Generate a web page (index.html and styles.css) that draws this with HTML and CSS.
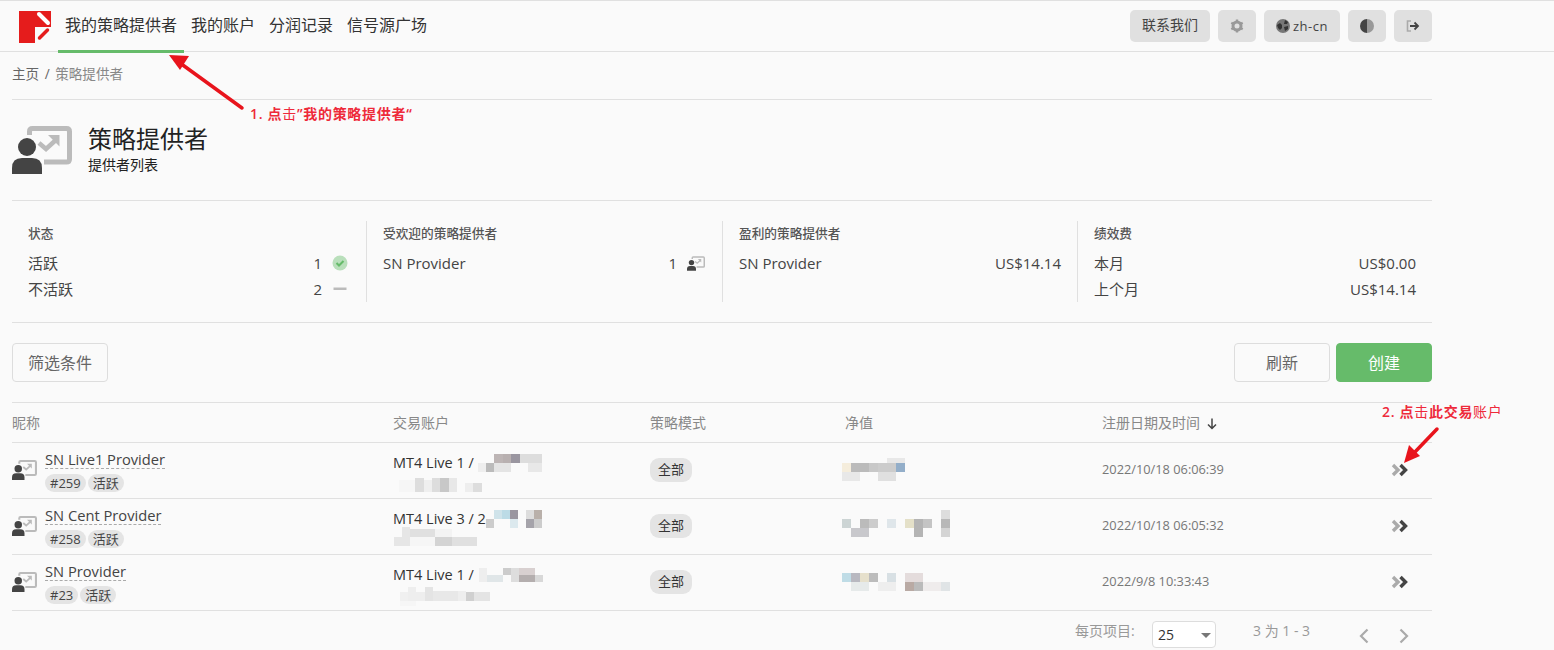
FILE: index.html
```html
<!DOCTYPE html>
<html lang="zh-CN">
<head>
    <meta charset="UTF-8">
    <meta name="viewport" content="width=device-width, initial-scale=1.0">
    <title>策略提供者</title>
    <link rel="stylesheet" href="styles.css">
</head>
<body>
    <svg class="icon-defs" width="0" height="0">
        <symbol id="provider" viewBox="0 0 60 48">
            <path d="M17.5 9V5.5q0-3 3-3h34q3 0 3 3V33q0 3-3 3H32" fill="none" stroke="#bbb" stroke-width="5"/>
            <path d="M27 17l7 6 11-10" fill="none" stroke="#bbb" stroke-width="4.5"/>
            <path d="M36 9h11.500v11.500z" fill="#bbb"/>
            <circle cx="15" cy="21" r="9" fill="#444"/>
            <path d="M0 48v-6q0-10 10-10h10q10 0 10 10v6z" fill="#444"/>
        </symbol>
        <symbol id="double-chevron" viewBox="0 0 18 14">
            <path d="M2 2l5 5-5 5" fill="none" stroke="#aaa" stroke-width="3.400"/>
            <path d="M9.500 2l5 5-5 5" fill="none" stroke="#444" stroke-width="3.400"/>
        </symbol>
    </svg>

    <header class="topbar">
        <div class="topbar-left">
            <svg class="logo" viewBox="0 0 32 32" width="32" height="32">
                <rect width="32" height="32" fill="#e51c1c"/>
                <rect x="16" y="16" width="16" height="16" fill="#fafafa"/>
                <path d="M20 3l9 9" stroke="#fff" stroke-width="4" stroke-linecap="round"/>
                <path d="M20.500 27l8-8" stroke="#e51c1c" stroke-width="3.500" stroke-linecap="round"/>
            </svg>
            <nav class="nav">
                <a class="nav-item active">我的策略提供者</a>
                <a class="nav-item">我的账户</a>
                <a class="nav-item">分润记录</a>
                <a class="nav-item">信号源广场</a>
            </nav>
        </div>
        <div class="topbar-right">
            <button class="top-btn contact">联系我们</button>
            <button class="top-btn square">
                <svg viewBox="0 0 14 14" width="14" height="14">
                    <circle cx="7" cy="7" r="4" fill="none" stroke="#999" stroke-width="3"/>
                    <path d="M7 0.500v2M7 11.500v2M1.300 3.700l1.800 1M10.900 9.300l1.800 1M1.300 10.300l1.800-1M10.900 4.700l1.800-1" stroke="#999" stroke-width="2.400"/>
                </svg>
            </button>
            <button class="top-btn lang">
                <svg viewBox="0 0 14 14" width="14" height="14">
                    <circle cx="7" cy="7" r="7" fill="#777"/>
                    <path d="M1 6l3-2 2 2 0 3-2 2-2-2zM9 1l3 2-1 2-3 0zM8 8l4-1 0 3-3 2z" fill="#333"/>
                </svg>
                zh-cn
            </button>
            <button class="top-btn square">
                <svg viewBox="0 0 14 14" width="14" height="14">
                    <path d="M7 0a7 7 0 0 0 0 14z" fill="#444"/>
                    <path d="M7 0a7 7 0 0 1 0 14z" fill="#999"/>
                </svg>
            </button>
            <button class="top-btn square">
                <svg viewBox="0 0 14 12" width="14" height="12">
                    <path d="M5 1H1.500v10H5" fill="none" stroke="#aaa" stroke-width="1.600"/>
                    <path d="M4 6h8M8.500 2.500L12 6l-3.500 3.500" fill="none" stroke="#444" stroke-width="1.800"/>
                </svg>
            </button>
        </div>
    </header>

    <main class="page">
        <div class="breadcrumb">
            <span>主页</span><span class="crumb-sep">/</span><span class="crumb-current">策略提供者</span>
        </div>

        <section class="page-title">
            <svg class="title-icon" width="60" height="48"><use href="#provider"/></svg>
            <div>
                <h1>策略提供者</h1>
                <p>提供者列表</p>
            </div>
        </section>

        <section class="stats">
            <div class="stat-col">
                <h3>状态</h3>
                <div class="stat-row">
                    <span>活跃</span>
                    <span class="stat-val">1
                        <svg class="stat-icon" viewBox="0 0 16 16" width="16" height="16">
                            <circle cx="8" cy="8" r="7.500" fill="#b9dfbb"/>
                            <path d="M4.500 8l2.500 2.500 4.500-4.500" fill="none" stroke="#66bb6a" stroke-width="2"/>
                        </svg>
                    </span>
                </div>
                <div class="stat-row">
                    <span>不活跃</span>
                    <span class="stat-val">2
                        <svg class="stat-icon" viewBox="0 0 16 16" width="16" height="16">
                            <rect x="1.500" y="6.500" width="13" height="2.500" fill="#bbb"/>
                        </svg>
                    </span>
                </div>
            </div>
            <div class="stat-col">
                <h3>受欢迎的策略提供者</h3>
                <div class="stat-row">
                    <span>SN Provider</span>
                    <span class="stat-val">1
                        <svg class="stat-icon wide" width="18" height="15"><use href="#provider"/></svg>
                    </span>
                </div>
            </div>
            <div class="stat-col">
                <h3>盈利的策略提供者</h3>
                <div class="stat-row">
                    <span>SN Provider</span>
                    <span>US$14.14</span>
                </div>
            </div>
            <div class="stat-col">
                <h3>绩效费</h3>
                <div class="stat-row">
                    <span>本月</span>
                    <span>US$0.00</span>
                </div>
                <div class="stat-row">
                    <span>上个月</span>
                    <span>US$14.14</span>
                </div>
            </div>
        </section>

        <div class="toolbar">
            <button class="btn">筛选条件</button>
            <div class="toolbar-right">
                <button class="btn">刷新</button>
                <button class="btn primary">创建</button>
            </div>
        </div>

        <table class="providers">
            <thead>
                <tr>
                    <th class="col-name">昵称</th>
                    <th class="col-account">交易账户</th>
                    <th class="col-mode">策略模式</th>
                    <th class="col-equity">净值</th>
                    <th>注册日期及时间
                        <svg class="sort-icon" viewBox="0 0 10 12" width="10" height="12">
                            <path d="M5 0.500v10M1 6.500l4 4 4-4" fill="none" stroke="#444" stroke-width="1.500"/>
                        </svg>
                    </th>
                    <th class="col-go"></th>
                </tr>
            </thead>
            <tbody>
                <tr>
                    <td>
                        <div class="name-cell">
                            <svg class="row-icon" width="25" height="20"><use href="#provider"/></svg>
                            <div>
                                <a class="name-link">SN Live1 Provider</a>
                                <div class="tags"><span class="tag">#259</span><span class="tag">活跃</span></div>
                            </div>
                        </div>
                    </td>
                    <td class="account-cell">
                        <div class="account">MT4 Live 1 /
                            <svg class="mosaic" width="64" height="18" viewBox="0 0 64 18">
                                <rect x="0" y="9" width="8" height="9" fill="#eee"/><rect x="8" y="9" width="8" height="9" fill="#bbb"/>
                                <rect x="16" y="0" width="9" height="9" fill="#bdb5b5"/><rect x="25" y="0" width="8" height="9" fill="#b8b0b0"/>
                                <rect x="16" y="9" width="17" height="9" fill="#e4e4e4"/><rect x="33" y="0" width="9" height="9" fill="#9a96a0"/>
                                <rect x="42" y="0" width="22" height="9" fill="#ddd"/><rect x="50" y="9" width="14" height="9" fill="#e8e8e8"/>
                            </svg>
                        </div>
                        <svg class="mosaic sub sub-first" width="84" height="14" viewBox="0 0 84 14">
                            <rect x="0" y="2" width="16" height="12" fill="#f6f6f6"/><rect x="16" y="0" width="9" height="14" fill="#ddd"/>
                            <rect x="25" y="2" width="8" height="12" fill="#efefef"/><rect x="33" y="0" width="8" height="14" fill="#ddd"/>
                            <rect x="41" y="0" width="9" height="14" fill="#c8c8c8"/><rect x="50" y="0" width="8" height="14" fill="#e8e8e8"/>
                            <rect x="66" y="5" width="8" height="9" fill="#eee"/><rect x="74" y="5" width="9" height="9" fill="#ddd"/>
                        </svg>
                    </td>
                    <td><span class="mode-pill">全部</span></td>
                    <td>
                        <svg class="mosaic equity" width="64" height="24" viewBox="0 0 64 24">
                            <rect x="0" y="5" width="9" height="9" fill="#f5eddc"/><rect x="9" y="5" width="18" height="9" fill="#bbb"/>
                            <rect x="27" y="5" width="9" height="9" fill="#c8c8c8"/><rect x="36" y="5" width="18" height="9" fill="#ccc"/>
                            <rect x="54" y="5" width="9" height="9" fill="#93aec9"/><rect x="45" y="0" width="18" height="5" fill="#e8e8e8"/>
                            <rect x="0" y="14" width="18" height="9" fill="#e8e8e8"/><rect x="36" y="14" width="18" height="9" fill="#e0e0e0"/>
                        </svg>
                    </td>
                    <td class="date">2022/10/18 06:06:39</td>
                    <td class="go"><svg width="18" height="14"><use href="#double-chevron"/></svg></td>
                </tr>
                <tr>
                    <td>
                        <div class="name-cell">
                            <svg class="row-icon" width="25" height="20"><use href="#provider"/></svg>
                            <div>
                                <a class="name-link">SN Cent Provider</a>
                                <div class="tags"><span class="tag">#258</span><span class="tag">活跃</span></div>
                            </div>
                        </div>
                    </td>
                    <td class="account-cell">
                        <div class="account">MT4 Live 3 / 2
                            <svg class="mosaic tight" width="56" height="18" viewBox="0 0 56 18">
                                <rect x="8" y="0" width="8" height="9" fill="#cfe3ea"/><rect x="16" y="0" width="8" height="9" fill="#bcdbe6"/>
                                <rect x="0" y="9" width="8" height="9" fill="#ccc"/><rect x="24" y="0" width="8" height="9" fill="#9a96a0"/>
                                <rect x="24" y="9" width="8" height="9" fill="#dce9ee"/><rect x="40" y="0" width="8" height="9" fill="#ddd"/>
                                <rect x="48" y="0" width="8" height="9" fill="#b9b0aa"/><rect x="40" y="9" width="8" height="9" fill="#a5a3aa"/>
                                <rect x="48" y="9" width="8" height="9" fill="#ccc"/>
                            </svg>
                        </div>
                        <svg class="mosaic sub sub-second" width="88" height="20" viewBox="0 0 88 20">
                            <rect x="8" y="0" width="8" height="10" fill="#e6e6e6"/><rect x="16" y="2" width="25" height="8" fill="#e0e0e0"/>
                            <rect x="0" y="10" width="16" height="9" fill="#e6e6e6"/><rect x="41" y="2" width="17" height="8" fill="#f3f3f3"/>
                            <rect x="41" y="10" width="17" height="9" fill="#d4d4d4"/><rect x="58" y="10" width="25" height="9" fill="#e0e0e0"/>
                            <rect x="16" y="10" width="25" height="9" fill="#f6f6f6"/>
                        </svg>
                    </td>
                    <td><span class="mode-pill">全部</span></td>
                    <td>
                        <svg class="mosaic equity up" width="108" height="27" viewBox="0 0 108 27">
                            <rect x="0" y="9" width="9" height="9" fill="#ccd4d4"/><rect x="18" y="9" width="9" height="9" fill="#bbb"/>
                            <rect x="27" y="9" width="9" height="9" fill="#ccc"/><rect x="45" y="9" width="9" height="9" fill="#dfe6ea"/>
                            <rect x="63" y="9" width="9" height="9" fill="#e4e0c8"/><rect x="72" y="9" width="9" height="18" fill="#b4b4b4"/>
                            <rect x="81" y="9" width="9" height="9" fill="#c4c4c4"/><rect x="99" y="0" width="9" height="9" fill="#ddd"/>
                            <rect x="99" y="9" width="9" height="9" fill="#b8b8b8"/><rect x="99" y="18" width="9" height="9" fill="#d4d4d4"/>
                            <rect x="9" y="18" width="18" height="9" fill="#c8c8cc"/>
                        </svg>
                    </td>
                    <td class="date">2022/10/18 06:05:32</td>
                    <td class="go"><svg width="18" height="14"><use href="#double-chevron"/></svg></td>
                </tr>
                <tr>
                    <td>
                        <div class="name-cell">
                            <svg class="row-icon" width="25" height="20"><use href="#provider"/></svg>
                            <div>
                                <a class="name-link">SN Provider</a>
                                <div class="tags"><span class="tag">#23</span><span class="tag">活跃</span></div>
                            </div>
                        </div>
                    </td>
                    <td class="account-cell">
                        <div class="account">MT4 Live 1 /
                            <svg class="mosaic" width="66" height="14" viewBox="0 0 64 14">
                                <rect x="0" y="0" width="8" height="14" fill="#eee"/><rect x="8" y="7" width="16" height="7" fill="#e0e6e8"/>
                                <rect x="24" y="0" width="8" height="7" fill="#ccc"/><rect x="32" y="0" width="8" height="14" fill="#ddd"/>
                                <rect x="40" y="0" width="16" height="7" fill="#d8d0d0"/><rect x="40" y="7" width="16" height="7" fill="#b4aeae"/>
                                <rect x="56" y="7" width="8" height="7" fill="#d8d8d8"/>
                            </svg>
                        </div>
                        <svg class="mosaic sub sub-third" width="90" height="19" viewBox="0 0 90 19">
                            <rect x="0" y="5" width="8" height="9" fill="#f0f0f0"/><rect x="8" y="0" width="8" height="14" fill="#eee"/>
                            <rect x="16" y="5" width="9" height="9" fill="#eee"/><rect x="25" y="0" width="8" height="14" fill="#e4e4e4"/>
                            <rect x="33" y="4" width="25" height="10" fill="#e8e8e8"/><rect x="58" y="4" width="8" height="10" fill="#eee"/>
                            <rect x="66" y="5" width="8" height="9" fill="#d0d0d0"/><rect x="74" y="5" width="16" height="9" fill="#e4e4e4"/>
                            <rect x="0" y="14" width="16" height="5" fill="#f6f6f6"/>
                        </svg>
                    </td>
                    <td><span class="mode-pill">全部</span></td>
                    <td>
                        <svg class="mosaic equity" width="108" height="18" viewBox="0 0 108 18">
                            <rect x="0" y="0" width="9" height="9" fill="#bfdce6"/><rect x="9" y="0" width="9" height="9" fill="#b8b8c0"/>
                            <rect x="18" y="0" width="9" height="9" fill="#e6e0cc"/><rect x="27" y="0" width="9" height="9" fill="#bcbcbc"/>
                            <rect x="45" y="0" width="9" height="9" fill="#d8e0e4"/><rect x="63" y="0" width="18" height="9" fill="#e4dcdc"/>
                            <rect x="63" y="9" width="9" height="9" fill="#b9aaa4"/><rect x="72" y="9" width="9" height="9" fill="#bbb"/>
                            <rect x="81" y="9" width="18" height="9" fill="#efecec"/><rect x="99" y="9" width="9" height="9" fill="#e0e4e6"/>
                            <rect x="9" y="9" width="18" height="9" fill="#e6eaea"/><rect x="36" y="9" width="18" height="9" fill="#eee"/>
                        </svg>
                    </td>
                    <td class="date">2022/9/8 10:33:43</td>
                    <td class="go"><svg width="18" height="14"><use href="#double-chevron"/></svg></td>
                </tr>
            </tbody>
        </table>

        <div class="pager">
            <span class="pager-label">每页项目:</span>
            <div class="page-size">25<span class="caret"></span></div>
            <span class="pager-range">3 为 1 - 3</span>
            <div class="pager-arrows">
                <svg viewBox="0 0 10 16" width="10" height="16"><path d="M8.500 1.500L2 8l6.500 6.500" fill="none" stroke="#aaa" stroke-width="2.200"/></svg>
                <svg viewBox="0 0 10 16" width="10" height="16"><path d="M1.500 1.500L8 8l-6.500 6.500" fill="none" stroke="#aaa" stroke-width="2.200"/></svg>
            </div>
        </div>
    </main>

    <!-- annotations pasted on top of the screenshot -->
    <svg class="marks" width="1554" height="650" viewBox="0 0 1554 650">
        <path d="M242 108L180 63" stroke="#e8141c" stroke-width="3.500" stroke-linecap="round"/>
        <path d="M169 55l20 1-9 14z" fill="#e8141c"/>
        <path d="M1437 429L1414 453" stroke="#e8141c" stroke-width="3.500" stroke-linecap="round"/>
        <path d="M1404 463l5-18 11 11z" fill="#e8141c"/>
    </svg>
    <div class="note note-one">1. 点<span class="note-light">击</span>”我的策略提供者“</div>
    <div class="note note-two">2. 点<span class="note-light">击</span>此交易<span class="note-light">账户</span></div>
</body>
</html>
```

FILE: styles.css
```css
* {
    box-sizing: border-box;
}

html, body {
    height: 650px;
    overflow: hidden;
}

body {
    font-family: "Open Sans", "Noto Sans CJK SC", sans-serif;
    margin: 0;
    padding: 0;
    background-color: #fafafa;
    color: #333;
    position: relative;
}

.icon-defs {
    position: absolute;
}

.topbar {
    height: 52px;
    border-top: 1px solid #e0e0e0;
    border-bottom: 1px solid #e0e0e0;
    display: flex;
    justify-content: space-between;
    padding: 0 122px 0 19px;
}

.topbar-left {
    display: flex;
}

.logo {
    margin-top: 10px;
    margin-right: 7px;
}

.nav {
    display: flex;
    height: 52px;
}

.nav-item {
    font-size: 16px;
    line-height: 48px;
    padding: 0 7px;
    height: 52px;
    border-bottom: 3px solid transparent;
}

.nav-item.active {
    border-bottom-color: #66bb6a;
}

.topbar-right {
    display: flex;
    gap: 8px;
    padding-top: 9px;
}

.top-btn {
    height: 32px;
    border: none;
    border-radius: 5px;
    background-color: #e0e0e0;
    color: #444;
    font-family: inherit;
    font-size: 14px;
    padding: 0;
    display: flex;
    align-items: center;
    justify-content: center;
}

.top-btn.contact {
    width: 80px;
    padding-bottom: 5px;
}

.top-btn.square {
    width: 38px;
}

.top-btn.lang {
    width: 76px;
    gap: 3px;
    font-size: 13px;
    letter-spacing: 0.5px;
}

.page {
    width: 1420px;
    margin-left: 12px;
}

.breadcrumb {
    height: 48px;
    border-bottom: 1px solid #e0e0e0;
    font-size: 13.600px;
    line-height: 44px;
    color: #666;
}

.crumb-sep {
    margin: 0 5.500px;
}

.crumb-current {
    color: #888;
}

.page-title {
    height: 101px;
    border-bottom: 1px solid #e0e0e0;
    display: flex;
    gap: 16px;
    padding-top: 26px;
}

.page-title h1 {
    font-size: 24px;
    font-weight: 400;
    line-height: 28px;
    margin: -1px 0 0;
    color: #222;
}

.page-title p {
    font-size: 14px;
    line-height: 20px;
    margin: 2px 0 0;
    color: #222;
}

.stats {
    height: 122px;
    border-bottom: 1px solid #e0e0e0;
    display: grid;
    grid-template-columns: 354px 356px 355px 355px;
    padding-top: 20px;
    padding-bottom: 20px;
}

.stat-col {
    padding: 0 16px;
    border-left: 1px solid #e0e0e0;
}

.stat-col:first-child {
    border-left: none;
}

.stat-col h3 {
    font-size: 12.700px;
    font-weight: 500;
    line-height: 24px;
    margin: 0 0 5px;
    color: #555;
}

.stat-row {
    display: flex;
    justify-content: space-between;
    align-items: center;
    font-size: 15px;
    line-height: 26px;
    color: #444;
}

.stat-val {
    display: flex;
    align-items: center;
    gap: 10px;
}

.stat-icon {
    width: 16px;
    margin-right: 2px;
}

.stat-icon.wide {
    width: 18px;
    margin-right: 1px;
}

.toolbar {
    display: flex;
    justify-content: space-between;
    padding: 20px 0;
    height: 80px;
    border-bottom: 1px solid #e0e0e0;
}

.toolbar-right {
    display: flex;
    gap: 6px;
}

.btn {
    width: 96px;
    height: 39px;
    border: 1px solid #ddd;
    border-radius: 4px;
    background-color: transparent;
    color: #666;
    font-family: inherit;
    font-size: 16px;
    padding: 0 0 2px;
}

.btn.primary {
    background-color: #66bb6a;
    border-color: #66bb6a;
    color: #fff;
}

.providers {
    width: 100%;
    border-collapse: collapse;
    table-layout: fixed;
}

.providers th {
    height: 39px;
    font-size: 14px;
    font-weight: 400;
    text-align: left;
    color: #888;
    padding: 0;
    border-bottom: 1px solid #e0e0e0;
}

.col-name {
    width: 381px;
}

.col-account {
    width: 257px;
}

.col-mode {
    width: 195px;
}

.col-equity {
    width: 257px;
}

.col-go {
    width: 60px;
}

.sort-icon {
    margin-left: 3px;
    vertical-align: -2px;
}

.providers td {
    height: 56px;
    padding: 0;
    border-bottom: 1px solid #e0e0e0;
    vertical-align: middle;
    font-size: 14px;
}

.name-cell {
    display: flex;
    align-items: center;
    gap: 8px;
    padding-top: 1px;
}

.row-icon {
    margin-top: -2px;
}

.name-link {
    display: inline-block;
    font-size: 14.700px;
    line-height: 18px;
    border-bottom: 1px dashed #aaa;
    color: #444;
    vertical-align: top;
}

.tags {
    display: flex;
    gap: 2px;
    margin-top: 5px;
}

.tag {
    font-size: 13px;
    line-height: 18px;
    padding: 0 5px;
    border-radius: 9px;
    background-color: #e4e4e4;
    color: #444;
}

.providers td.account-cell {
    vertical-align: top;
    padding-top: 10px;
}

.account {
    font-size: 14.500px;
    line-height: 20px;
    height: 20px;
    color: #333;
    white-space: nowrap;
    display: flex;
    align-items: center;
}

.mosaic {
    display: block;
}

.account .mosaic {
    margin-left: 4px;
}

.account .mosaic.tight {
    margin-left: 0;
}

.mosaic.sub-first {
    margin: 5px 0 0 6px;
}

.mosaic.sub-second {
    margin: -2px 0 0 1px;
}

.mosaic.sub-third {
    margin: 2px 0 0 7px;
}

.mosaic.equity {
    margin-left: -3px;
}

.mosaic.equity.up {
    margin-top: -6px;
}

.mode-pill {
    display: inline-block;
    width: 42px;
    text-align: center;
    font-size: 13px;
    line-height: 22px;
    padding-bottom: 2px;
    border-radius: 9px;
    background-color: #e4e4e4;
}

.providers td.date {
    font-size: 12.800px;
    color: #777;
    padding-bottom: 2px;
}

.providers td.go {
    text-align: right;
    padding-right: 23px;
    padding-top: 2px;
}

.pager {
    display: flex;
    align-items: center;
    height: 39px;
    font-size: 14px;
    color: #999;
    padding-left: 1063px;
}

.pager-label {
    width: 77px;
}

.page-size {
    width: 64px;
    height: 27px;
    margin-top: 8px;
    border: 1px solid #ddd;
    border-radius: 4px;
    background-color: #fff;
    padding-left: 5px;
    font-size: 14px;
    line-height: 25px;
    color: #333;
    position: relative;
}

.caret {
    position: absolute;
    right: 4px;
    top: 11px;
    border-left: 5px solid transparent;
    border-right: 5px solid transparent;
    border-top: 5px solid #777;
}

.pager-range {
    margin-left: 37px;
}

.pager-arrows {
    display: flex;
    gap: 30px;
    margin-left: 49px;
    margin-top: 12px;
}

/* annotations */
.marks {
    position: absolute;
    left: 0;
    top: 0;
    pointer-events: none;
}

.note {
    position: absolute;
    font-size: 14px;
    letter-spacing: 0.700px;
    line-height: 18px;
    font-weight: 600;
    color: #ee2a3a;
    white-space: nowrap;
}

.note-light {
    font-weight: 400;
}

.note-one {
    left: 250px;
    top: 105px;
}

.note-two {
    left: 1382px;
    top: 403px;
}
```
